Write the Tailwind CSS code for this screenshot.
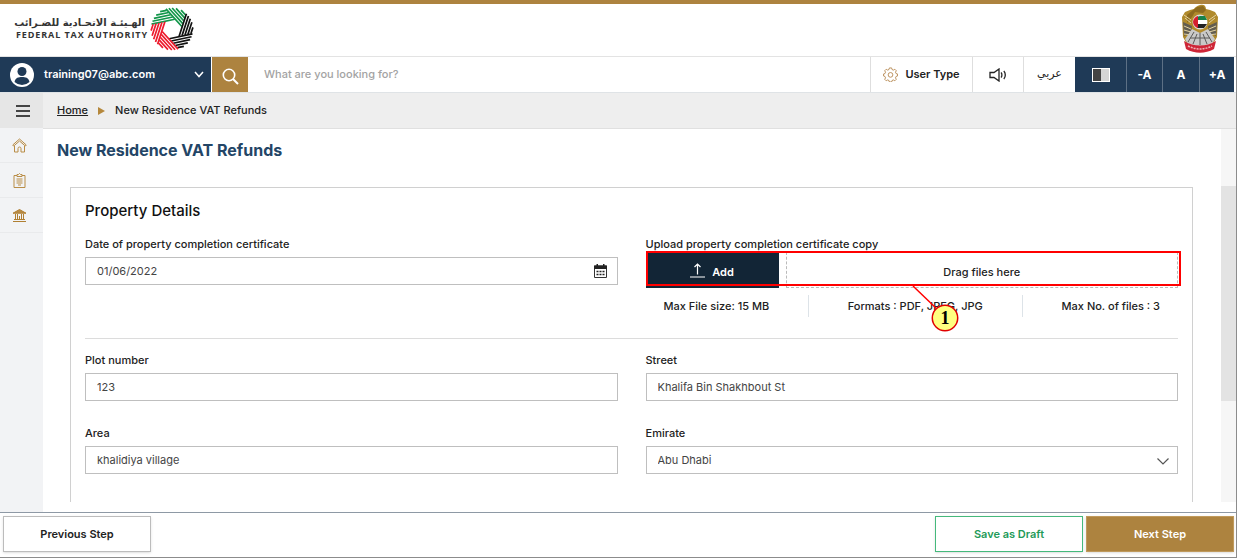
<!DOCTYPE html>
<html lang="en">
<head>
<meta charset="utf-8">
<meta name="viewport" content="width=device-width, initial-scale=1">
<title>New Residence VAT Refunds</title>
<script src="https://cdn.jsdelivr.net/npm/@tailwindcss/browser@4"></script>
</head>
<body class="flex h-screen flex-col overflow-hidden border-r border-b border-[#8c8c8c] bg-white font-['Inter',sans-serif] text-[11px] font-medium text-[#222]">

<header class="flex h-[57px] shrink-0 items-center justify-between border-t-4 border-b border-t-[#ad833f] border-b-[#e3e3e3] px-4 pb-[3px]">
  <div class="flex items-center gap-[5px]">
    <div class="w-[129px] text-[#333]">
      <p lang="ar" dir="rtl" class="text-[10px] leading-[12px] font-bold whitespace-nowrap font-['DejaVu_Sans',sans-serif]">الهـيئـة الاتحـادية للضـرائب</p>
      <p class="text-[9px] leading-[12px] font-bold tracking-widest whitespace-nowrap font-['Open_Sans',sans-serif]">FEDERAL TAX AUTHORITY</p>
    </div>
    <svg class="size-[44px]" viewBox="-22 -22 44 44" fill="none" stroke-width="1.7" aria-label="Federal Tax Authority">
      <defs><path id="band" d="M-19 -9H4.700M-17.500 -11.600H3.200M-15.500 -14.200H1.700M-12.600 -16.800H.2M-8 -19.400H-1.300"/></defs>
      <g stroke="#12964a"><use href="#band" transform="rotate(-12)"/><use href="#band" transform="rotate(48)"/></g>
      <g stroke="#111"><use href="#band" transform="rotate(108)"/><use href="#band" transform="rotate(168)"/></g>
      <g stroke="#ed1c2e"><use href="#band" transform="rotate(228)"/><use href="#band" transform="rotate(288)"/></g>
    </svg>
  </div>
  <svg class="h-[49px] w-[40px]" viewBox="0 0 40 49" aria-label="UAE emblem">
    <path d="M20 1c3-1 6 0 6 4l4 1 5 2 3 5-1 20-5 9H8l-5-9L2 13l3-5 5-2 4-1c1-2 3-3 6-4z" fill="#b08a2c"/>
    <path d="M17 3l6-1 3 4-3 3-8-1-3 5-5 6V11l6-5z" fill="#8d6b1f"/>
    <path d="M3 18l9 4-1 7-7 3zM37 18l-9 4 1 7 7 3z" fill="#625d50"/>
    <path d="M4 22l7 3M4 26l7 2M4 30l8 1M36 22l-7 3M36 26l-7 2M36 30l-8 1M5 14l6 5M35 14l-6 5M4 11l7 5M36 11l-7 5" stroke="#e3d2a0" stroke-width="1"/>
    <path d="M12 25l8 4 8-4 7 10-5 9H10l-5-9z" fill="#c9c9c7"/>
    <path d="M14 28l-6 10M17 30l-4 10M20 29v12M23 30l4 10M26 28l6 10M10 34h20" stroke="#5b5b59" stroke-width="1"/>
    <path d="M12 14h16l-2 10-6 4-6-4z" fill="#b8912f"/>
    <circle cx="20" cy="18" r="7.500" fill="#ddd"/>
    <path d="M20 12h5l2 4h-10v-3z" fill="#16824a"/><path d="M16 16h11v4H16z" fill="#fff"/><path d="M17 20h10l-3 4h-7z" fill="#222"/><path d="M13 18a7 7 0 0 1 5-6v12a7 7 0 0 1-5-6z" fill="#d61f2e"/>
    <path d="M4 37c10 6 22 6 32 0l-2 8c-9 5-19 5-28 0z" fill="#ce2637"/>
    <path d="M8 42c8 4 16 4 24 0" stroke="#f0b6b9" stroke-width="1.500" stroke-dasharray="2 1" fill="none"/>
  </svg>
</header>

<nav class="flex h-[36px] shrink-0 border-b border-[#dfe3e6] pr-[2px]" aria-label="Tools">
  <button class="flex w-[212px] items-center border-r border-white bg-[#1f3a57] pr-[7px] pl-[9px] text-left font-semibold text-white">
    <svg class="mr-[9px] size-[26px]" viewBox="0 0 26 26"><circle cx="13" cy="13" r="12" fill="#fff"/><circle cx="13" cy="9.500" r="4.500" fill="#1f3a57"/><path d="M5.500 20c1-4.500 4-5 7.500-5s6.500.5 7.500 5a11 11 0 0 1-15 0z" fill="#1f3a57"/></svg>
    <span class="flex-1">training07@abc.com</span>
    <svg class="h-[7px] w-[10px]" viewBox="0 0 10 7" fill="none" stroke="#fff" stroke-width="1.500"><path d="M1 1l4 4.500L9 1"/></svg>
  </button>
  <button class="flex w-[36px] items-center justify-center bg-[#ad833f]" aria-label="Search">
    <svg class="mt-1 size-[17px]" viewBox="0 0 17 17" fill="none" stroke="#fff" stroke-width="1.600"><circle cx="7" cy="7" r="5.700"/><path d="M11 11l5 5" stroke-width="2"/></svg>
  </button>
  <input type="search" aria-label="Search" placeholder="What are you looking for?" class="min-w-0 flex-1 px-4 outline-none placeholder:text-[#a3a3a3]">
  <button class="flex w-[102px] items-center justify-center gap-[7px] border-l border-[#dedede] font-semibold">
    <svg class="size-[15px]" viewBox="0 0 16 16" fill="none" stroke="#b98d57"><path d="M6.800 1h2.400l.4 1.700 1.500.6 1.500-.9 1.600 1.600-.9 1.500.6 1.500 1.600.4v2.200l-1.600.5-.6 1.500.9 1.500-1.600 1.600-1.500-.9-1.500.6-.4 1.600H6.800l-.4-1.600-1.500-.6-1.500.9-1.600-1.600.9-1.500-.6-1.500L.6 9.600V7.400L2.100 7l.6-1.500L1.800 4l1.600-1.600 1.500.9 1.500-.6z"/><circle cx="8" cy="8.400" r="2.500"/></svg>
    User Type
  </button>
  <button class="flex w-[51px] items-center justify-center border-l border-[#dedede]" aria-label="Read aloud">
    <svg class="h-[14px] w-[18px]" viewBox="0 0 18 14" fill="none" stroke="#222" stroke-width="1.300"><path d="M1 4.500h4L10 1v12L5 9.500H1zM12 4.500c1.200 1.200 1.200 3.800 0 5M14.800 3c2 2 2 6 0 8"/></svg>
  </button>
  <button lang="ar" class="w-[52px] border-l border-[#dedede] text-[11px] font-['DejaVu_Sans',sans-serif]">عربي</button>
  <div class="flex bg-[#1f3a57] text-[12px] font-bold text-white">
    <button class="flex w-[51px] items-center justify-center" aria-label="Contrast"><span class="flex h-[14px] w-[18px] border border-white bg-[#d5d5d5]"><span class="w-1/2 bg-[#444]"></span></span></button>
    <button class="w-[36px] border-l border-[#5d7085]">-A</button>
    <button class="w-[37px] border-l border-[#5d7085]">A</button>
    <button class="w-[35px] border-l border-[#5d7085]">+A</button>
  </div>
</nav>

<div class="flex min-h-0 flex-1">
  <aside class="flex w-[43px] shrink-0 flex-col bg-[#f2f3f5]">
    <button class="flex h-[35px] shrink-0 items-center bg-[#e6e6e6] pl-4" aria-label="Menu">
      <svg class="h-[12px] w-[14px]" viewBox="0 0 14 12" stroke="#444" stroke-width="2"><path d="M0 1h14M0 6h14M0 11h14"/></svg>
    </button>
    <a href="#" class="flex h-[35px] items-center border-b border-[#e9eaec] pl-[12px]" aria-label="Home">
      <svg class="size-[15px]" viewBox="0 0 15 15" fill="none" stroke="#b98d47" stroke-width="1"><path d="M.7 7L7.500 1l6.800 6-1 1-5.800-5-5.800 5zM2.500 8v6H6v-3.500a1.500 1.500 0 0 1 3 0V14h3.500V8"/></svg>
    </a>
    <a href="#" class="flex h-[35px] items-center border-b border-[#e9eaec] pl-[12px]" aria-label="Forms">
      <svg class="size-[15px]" viewBox="0 0 15 15" fill="none" stroke="#b98d47" stroke-width="1"><path d="M5 2.500H2v12h11v-12h-3M5 1.500h1.500L7.500.5l1 1H10v2H5zM4.500 6h6M4.500 8h6M4.500 10h6M6 12h3"/></svg>
    </a>
    <a href="#" class="flex h-[35px] items-center border-b border-[#e9eaec] pl-[12px]" aria-label="Payments">
      <svg class="size-[15px]" viewBox="0 0 15 15" fill="none" stroke="#b07f32"><path d="M1 5.200L7.500 1.500 14 5.200z" fill="#b98d47"/><path d="M1 13.500h13M2 11.500h11M3.500 6v5M5.500 6v5M9.500 6v5M11.500 6v5M7.500 8v3" /></svg>
    </a>
  </aside>

  <div class="flex min-w-0 flex-1 flex-col">
    <div class="flex h-[36px] shrink-0 items-center gap-[10px] border-b border-[#e0e0e0] bg-[#eeeeee] pl-[14px]">
      <a href="#" class="underline">Home</a>
      <svg class="h-[8px] w-[7px]" viewBox="0 0 7 8"><path d="M0 0l7 4-7 4z" fill="#b5883c"/></svg>
      <span>New Residence VAT Refunds</span>
    </div>
    <main class="mb-[10px] flex min-h-0 flex-1">
      <div class="min-w-0 flex-1 overflow-hidden pr-[28px] pl-[14px]">
        <h1 class="mt-[10px] text-[16px] leading-[22px] font-bold text-[#234566]">New Residence VAT Refunds</h1>
        <form class="mt-[26px] ml-[13px] h-[400px] border border-[#d0d0d0] px-[14px] pt-[13px]">
          <h2 class="text-[15px] leading-[20px] text-[#111]">Property Details</h2>
          <div class="mt-[15px] grid grid-cols-2 gap-x-[28px]">
            <div>
              <label for="date" class="block leading-[16px]">Date of property completion certificate</label>
              <div class="relative mt-[5px]">
                <input id="date" type="text" value="01/06/2022" class="h-[28px] w-full border border-[#bfbfbf] px-[11px] font-normal text-[#444]">
                <svg class="absolute top-[7px] right-[11px] h-[14px] w-[13px]" viewBox="0 0 13 14"><path d="M.5 2h12v11.500H.5z" fill="#fff" stroke="#333"/><path d="M0 1.500h13V5H0zM2.500 0H4v2H2.500zM9 0h1.500v2H9z" fill="#222"/><path d="M2.500 7.500h8M2.500 10.500h8" stroke="#222" stroke-width="1.500" stroke-dasharray="2 1"/></svg>
              </div>
            </div>
            <div>
              <label for="upload" class="block leading-[16px]">Upload property completion certificate copy</label>
              <div class="relative flex h-[36px] gap-[7px]">
                <button id="upload" type="button" class="flex w-[133px] items-center justify-center gap-[7px] bg-[#122536] font-semibold text-white">
                  <svg class="h-[15px] w-[15px]" viewBox="0 0 15 15" fill="none" stroke="#fff" stroke-width="1.200"><path d="M7.500 11.500V1M4.500 4l3-3 3 3M0 14h15"/></svg>
                  <span class="pt-1">Add</span>
                </button>
                <div class="flex flex-1 items-center justify-center border border-dashed border-[#bbb] pt-1">Drag files here</div>
                <div class="absolute -top-px -right-[3px] left-0 h-[35px] border-2 border-[#f00]"></div>
                <svg class="absolute top-[33px] left-1/2 z-10 h-[48px] w-[48px]" viewBox="0 0 48 48"><path d="M1 1l25 24" stroke="#f00" stroke-width="1.500"/><circle cx="33" cy="33" r="12.700" fill="#ffff80" stroke="#e00000" stroke-width="1.500"/><text x="33" y="39" text-anchor="middle" class="fill-black text-[18px] font-bold font-['Liberation_Serif',serif]">1</text></svg>
              </div>
              <div class="mt-[7px] flex h-[22px] items-center text-center">
                <span class="w-[162px] pl-[18px] text-left">Max File size: 15 MB</span>
                <span class="flex h-full flex-1 items-center justify-center border-x border-[#dde3e8]">Formats : PDF, JPEG, JPG</span>
                <span class="w-[155px] pr-[18px] text-right">Max No. of files : 3</span>
              </div>
            </div>
          </div>
          <hr class="mt-[21px] border-[#dcdcdc]">
          <div class="mt-[13px] grid grid-cols-2 gap-x-[28px] gap-y-[24px]">
            <div><label for="plot" class="block leading-[16px]">Plot number</label><input id="plot" type="text" value="123" class="mt-[5px] block h-[28px] w-full border border-[#bfbfbf] px-[11px] font-normal text-[#444]"></div>
            <div><label for="street" class="block leading-[16px]">Street</label><input id="street" type="text" value="Khalifa Bin Shakhbout St" class="mt-[5px] block h-[28px] w-full border border-[#bfbfbf] px-[11px] font-normal text-[#444]"></div>
            <div><label for="area" class="block leading-[16px]">Area</label><input id="area" type="text" value="khalidiya village" class="mt-[5px] block h-[28px] w-full border border-[#bfbfbf] px-[11px] font-normal text-[#444]"></div>
            <div><label for="emirate" class="block leading-[16px]">Emirate</label>
              <div class="relative mt-[5px]">
                <select id="emirate" class="block h-[28px] w-full appearance-none border border-[#bfbfbf] bg-white px-[11px] font-normal text-[#444]"><option>Abu Dhabi</option></select>
                <svg class="pointer-events-none absolute top-[12px] right-[9px] h-[7px] w-[12px]" viewBox="0 0 12 7" fill="none" stroke="#555" stroke-width="1.200"><path d="M.5.5L6 6 11.500.5"/></svg>
              </div>
            </div>
          </div>
        </form>
      </div>
      <div class="w-[15px] bg-[#f6f6f6] pt-[57px]"><div class="h-[215px] bg-[#e3e3e3]"></div></div>
    </main>
  </div>
</div>

<footer class="flex h-[45px] shrink-0 items-start gap-[3px] border-t border-[#8e99a5] pt-[3px] pr-[2px] pl-[3px] text-[11px] font-semibold">
  <button class="mr-auto h-[36px] w-[148px] border border-[#bcbcbc] shadow">Previous Step</button>
  <button class="h-[36px] w-[148px] border border-[#45b97c] text-[#239a58] shadow">Save as Draft</button>
  <button class="h-[36px] w-[148px] border border-[#c09a5c] bg-[#ad833f] text-white shadow">Next Step</button>
</footer>
</body>
</html>
